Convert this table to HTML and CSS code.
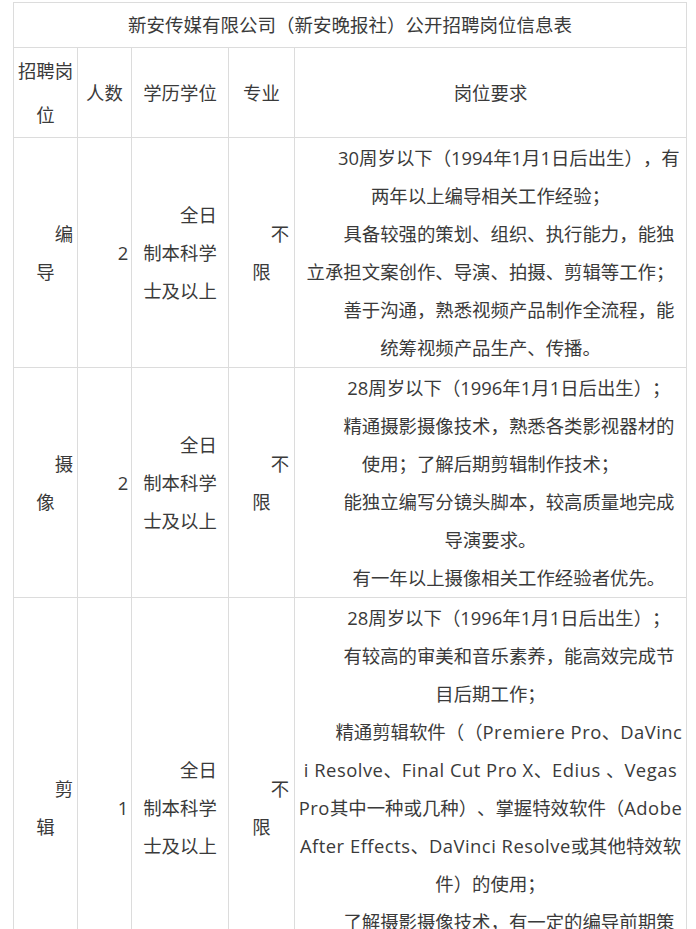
FILE: index.html
```html
<!DOCTYPE html>
<html lang="zh-CN">
<head>
<meta charset="utf-8">
<title>新安传媒有限公司（新安晚报社）公开招聘岗位信息表</title>
<link rel="stylesheet" href="styles.css">
</head>
<body>
<table class="jobs">
  <colgroup>
    <col class="col-post">
    <col class="col-num">
    <col class="col-edu">
    <col class="col-major">
    <col class="col-req">
  </colgroup>
  <tr class="title-row">
    <td colspan="5" class="title">新安传媒有限公司（新安晚报社）公开招聘岗位信息表</td>
  </tr>
  <tr class="head-row">
    <td>招聘岗位</td>
    <td>人数</td>
    <td>学历学位</td>
    <td>专业</td>
    <td>岗位要求</td>
  </tr>
  <tr class="body-row">
    <td class="ind">编导</td>
    <td class="ind">2</td>
    <td class="ind">全日制本科学士及以上</td>
    <td class="ind">不限</td>
    <td class="req">
      <p>30周岁以下（1994年1月1日后出生），有两年以上编导相关工作经验；</p>
      <p>具备较强的策划、组织、执行能力，能独立承担文案创作、导演、拍摄、剪辑等工作；</p>
      <p>善于沟通，熟悉视频产品制作全流程，能统筹视频产品生产、传播。</p>
    </td>
  </tr>
  <tr class="body-row">
    <td class="ind">摄像</td>
    <td class="ind">2</td>
    <td class="ind">全日制本科学士及以上</td>
    <td class="ind">不限</td>
    <td class="req">
      <p>28周岁以下（1996年1月1日后出生）；</p>
      <p>精通摄影摄像技术，熟悉各类影视器材的使用；了解后期剪辑制作技术；</p>
      <p>能独立编写分镜头脚本，较高质量地完成导演要求。</p>
      <p>有一年以上摄像相关工作经验者优先。</p>
    </td>
  </tr>
  <tr class="body-row">
    <td class="ind">剪辑</td>
    <td class="ind">1</td>
    <td class="ind">全日制本科学士及以上</td>
    <td class="ind">不限</td>
    <td class="req">
      <p>28周岁以下（1996年1月1日后出生）；</p>
      <p>有较高的审美和音乐素养，能高效完成节目后期工作；</p>
      <p>精通剪辑软件（（<span class="en" lang="en">Premiere Pro</span>、<span class="en" lang="en">DaVinci Resolve</span>、<span class="en" lang="en">Final Cut Pro X</span>、<span class="en" lang="en">Edius </span>、<span class="en" lang="en">Vegas Pro</span>其中一种或几种）、掌握特效软件（<span class="en" lang="en">Adobe After Effects</span>、<span class="en" lang="en">DaVinci Resolve</span>或其他特效软件）的使用；</p>
      <p>了解摄影摄像技术，有一定的编导前期策划能力；</p>
      <p>有一年以上剪辑相关工作经验者优先。</p>
    </td>
  </tr>
</table>
</body>
</html>
```

FILE: styles.css
```css
html, body {
  margin: 0;
  padding: 0;
  background: #ffffff;
}

body {
  padding-top: 2px;
  font-family: "Open Sans", "Noto Sans CJK SC", sans-serif;
  font-size: 18.4px;
  color: #3a3a3a;
  text-spacing-trim: space-all;
  font-feature-settings: "halt" 0, "chws" 0;
}

.jobs {
  margin-left: 13px;
  border-collapse: collapse;
  table-layout: fixed;
  width: 673px;
}

.col-post { width: 64px; }
.col-num { width: 54px; }
.col-edu { width: 97px; }
.col-major { width: 66px; }
.col-req { width: 392px; }

.jobs td {
  border: 1px solid #dcdcdc;
  padding: 1px 3px 0;
  text-align: center;
  vertical-align: middle;
  word-break: break-all;
  line-height: 38px;
}

.title-row td {
  line-height: 44px;
  padding: 0 3px;
  font-size: 18.5px;
}

.head-row td {
  line-height: 44px;
  padding: 1px 3px 0;
}

.ind {
  text-indent: 2em;
}

.req p {
  margin: 0;
  text-indent: 2em;
}

.req .en {
  letter-spacing: 0.5px;
}
```
